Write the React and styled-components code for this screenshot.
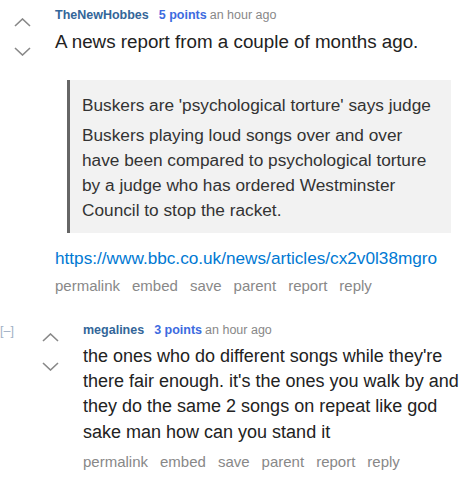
import styled, { createGlobalStyle } from 'styled-components'

const GlobalStyle = createGlobalStyle`
  html, body {
    margin: 0;
    padding: 0;
    background: #fff;
    font-family: 'Liberation Sans', Arial, sans-serif;
  }
`

const Page = styled.div`
  width: 473px;
  height: 486px;
  overflow: hidden;
  padding-top: 6px;
  box-sizing: border-box;
`

const Row = styled.div`
  display: flex;
  align-items: flex-start;
  margin-top: ${(p) => p.$gap || 0}px;
`

const Toggle = styled.span`
  width: 28px;
  flex: none;
  font-size: 12.5px;
  line-height: 18px;
  padding-top: 1px;
  color: #9fb0c5;
`

const Votes = styled.div`
  width: 55px;
  flex: none;
  display: flex;
  flex-direction: column;
  gap: 20px;
  padding-top: 12px;
  padding-left: 14px;
  box-sizing: border-box;
`

const Entry = styled.div`
  flex: 1;
  min-width: 0;
`

const Tagline = styled.div`
  font-size: 12.5px;
  line-height: 18px;
  color: #888;
`

const Author = styled.a`
  color: #369;
  font-weight: bold;
  margin-right: 10px;
  text-decoration: none;
`

const Score = styled.span`
  color: #3d6be0;
  font-weight: bold;
  margin-right: 3px;
`

const Body = styled.div`
  font-size: ${(p) => p.$size || 18}px;
  line-height: 25.3px;
  color: #222;
  margin-top: 4.5px;
`

const Para = styled.p`
  margin: 0;
`

const Quote = styled.blockquote`
  margin: 26px 22px 0 12px;
  padding: 13px 4px 10px 12px;
  background: #f2f2f2;
  border-left: 3px solid #666;
  font-size: 17.25px;
  color: #333;
`

const QuoteTitle = styled.p`
  margin: 0 0 6.5px;
  line-height: 24px;
  white-space: nowrap;
`

const QuoteText = styled.p`
  margin: 0;
  line-height: 25px;
`

const Link = styled.a`
  display: block;
  margin: 14px 0 6px;
  font-size: 17.2px;
  line-height: 22px;
  color: #0079d3;
  text-decoration: none;
`

const Actions = styled.ul`
  display: flex;
  gap: 12px;
  list-style: none;
  margin: 6px 0 0;
  padding: 0;
  font-size: 15px;
  line-height: 22px;
  color: #888;
`

function Arrow({ down }) {
  return (
    <svg width='17' height='9' viewBox='0 0 17 9' fill='none'>
      <path
        d={down ? 'M1 1 L8.5 8 L16 1' : 'M1 8 L8.5 1 L16 8'}
        stroke='#888'
        strokeWidth='1.6'
      />
    </svg>
  )
}

function Comment({ author, points, nested, gap, size, children }) {
  return (
    <Row $gap={gap}>
      {nested && <Toggle>[–]</Toggle>}
      <Votes>
        <Arrow />
        <Arrow down />
      </Votes>
      <Entry>
        <Tagline>
          <Author href='#'>{author}</Author>
          <Score>{points} points</Score>
          an hour ago
        </Tagline>
        <Body $size={size}>{children}</Body>
        <Actions>
          {['permalink', 'embed', 'save', 'parent', 'report', 'reply'].map((a) => (
            <li key={a}>{a}</li>
          ))}
        </Actions>
      </Entry>
    </Row>
  )
}

export default function App() {
  return (
    <Page>
      <GlobalStyle />
      <Comment author='TheNewHobbes' points={5} size={18.8}>
        <Para>A news report from a couple of months ago.</Para>
        <Quote>
          <QuoteTitle>Buskers are 'psychological torture' says judge</QuoteTitle>
          <QuoteText>
            Buskers playing loud songs over and over
            <br />
            have been compared to psychological torture
            <br />
            by a judge who has ordered Westminster
            <br />
            Council to stop the racket.
          </QuoteText>
        </Quote>
        <Link href='#'>https://www.bbc.co.uk/news/articles/cx2v0l38mgro</Link>
      </Comment>
      <Comment author='megalines' points={3} nested gap={24}>
        <Para>
          the ones who do different songs while they're there fair enough. it's the ones you
          walk by and they do the same 2 songs on repeat like god sake man how can you stand it
        </Para>
      </Comment>
    </Page>
  )
}
